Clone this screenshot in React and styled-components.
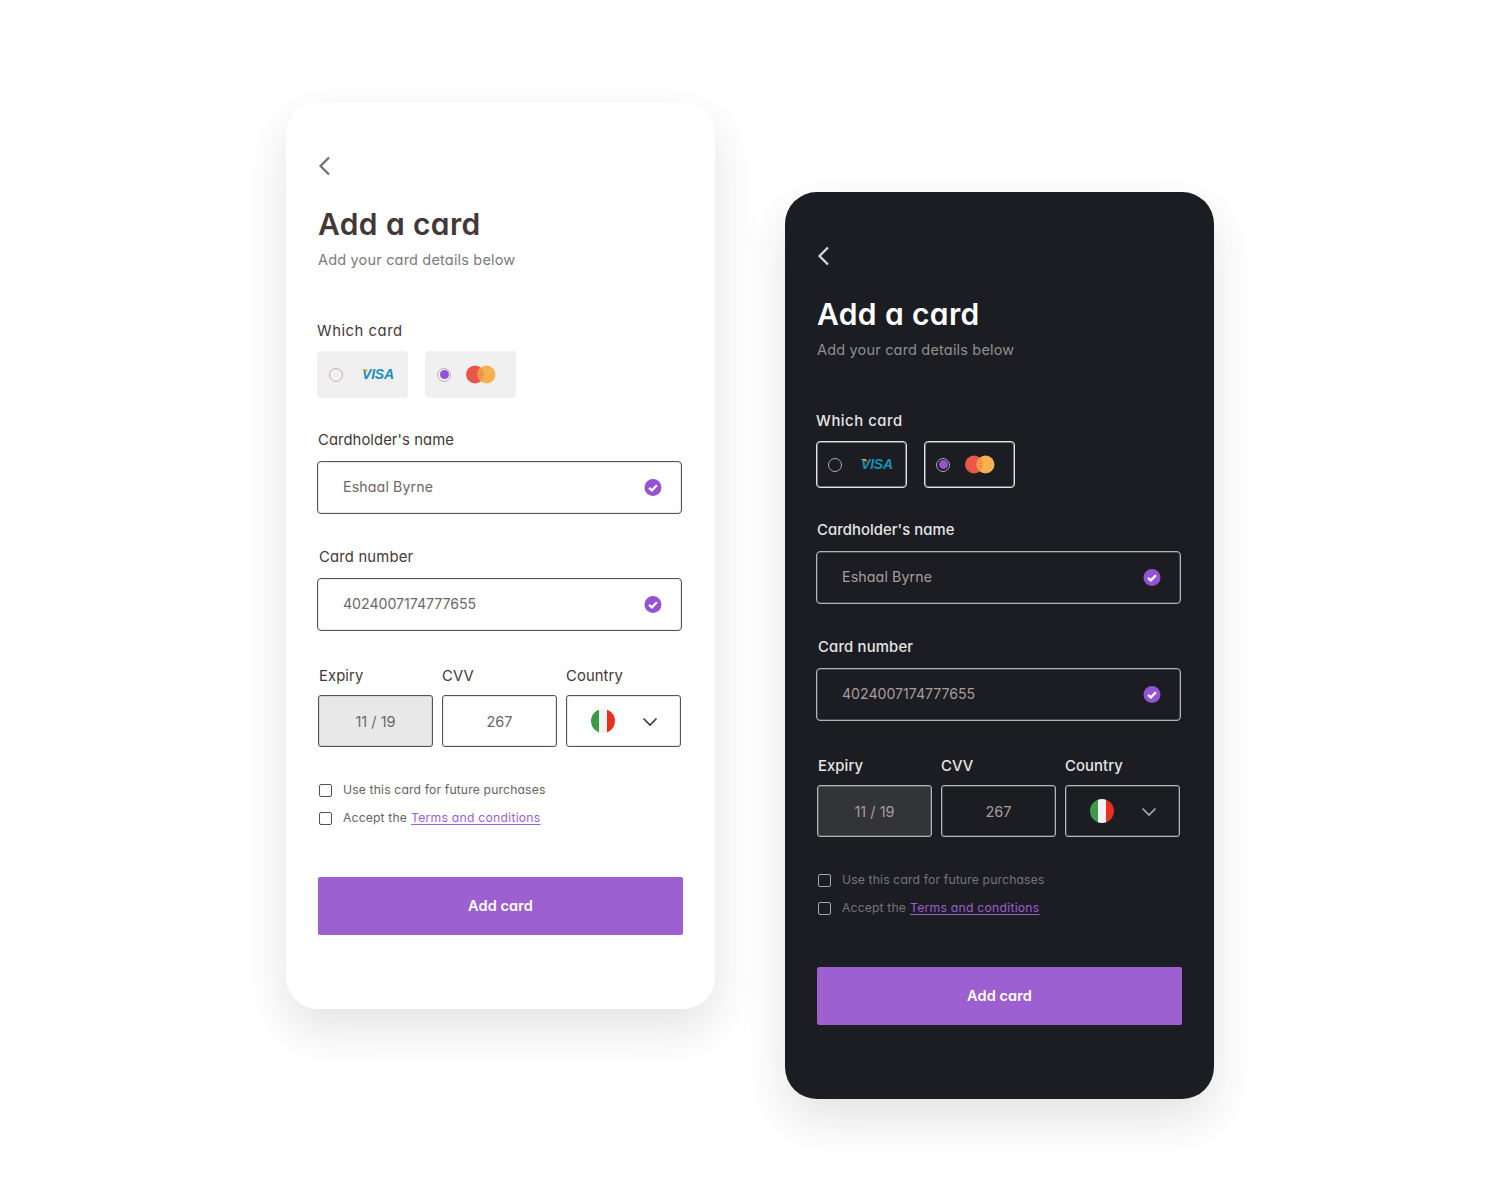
import React from "react";
import styled, { createGlobalStyle, ThemeProvider } from "styled-components";

const light = {
  bg: "#ffffff", title: "#433838", sub: "#7b7b7b", label: "#433838",
  tile: "#f0f0f0", tileBorder: "transparent", tileInner: "transparent", border: "#5a5050", soft: "rgba(90,80,80,0.12)", value: "#6e6868",
  filled: "#e8e8e8", radio: "#bfb0b0", chev: "#6f6f6f", arrow: "#433838",
  box: "#5a5050", check: "#6a6262", labelWeight: 400,
};
const dark = {
  bg: "#1c1d22", title: "#ffffff", sub: "#8f8f8f", label: "#e6e6e6",
  tile: "#1c1d22", tileBorder: "#e2e2e2", tileInner: "rgba(226,226,226,0.45)", border: "#b4b4b4", soft: "rgba(180,180,180,0.3)", value: "#a89c9c",
  filled: "#333438", radio: "#b5a8a8", chev: "#dcdcdc", arrow: "#a9a9a9",
  box: "#a8a8a8", check: "#75757a", labelWeight: 500,
};

const Global = createGlobalStyle`
  html, body { margin: 0; padding: 0; background: #fff; }
  body { font-family: Inter, "Liberation Sans", sans-serif; font-feature-settings: "cv11" 1; }
`;

const Stage = styled.main`
  display: flex; justify-content: center; align-items: flex-start; gap: 70px;
  padding-top: 102px; height: 1200px; box-sizing: border-box; overflow: hidden;
`;
const Card = styled.section`
  width: 429px; height: 907px; box-sizing: border-box; padding: 52px 32px 0;
  margin-top: ${p => p.$offset || 0}px;
  border-radius: 32px; background: ${p => p.theme.bg};
  box-shadow: 0 20px 46px rgba(40, 40, 50, 0.13);
`;
const Back = styled.button`
  display: block; width: 14px; height: 24px; padding: 0; border: 0; background: none;
  color: ${p => p.theme.chev};
`;
const Title = styled.h1`
  margin: 29px 0 0; font-size: 30px; line-height: 35px; font-weight: 600;
  letter-spacing: 0.38px; color: ${p => p.theme.title};
`;
const Sub = styled.p`
  margin: 8px 0 0; font-size: 14.5px; line-height: 20px; letter-spacing: 0.18px; color: ${p => p.theme.sub};
`;
const Label = styled.div`
  margin: ${p => p.$top || 0}px 0 0 ${p => p.$left || 0}px;
  font-size: 14.8px; line-height: 20px; letter-spacing: ${p => p.$spacing ?? 0.1}px;
  font-weight: ${p => p.theme.labelWeight}; color: ${p => p.theme.label};
`;
const Tiles = styled.div`
  display: flex; gap: 17px; margin: 10px 0 0 -1px;
`;
const Tile = styled.div`
  width: 91px; height: 47px; box-sizing: border-box; display: flex; align-items: center;
  padding-left: 11px; border-radius: 4px; background: ${p => p.theme.tile};
  border: 1px solid ${p => p.theme.tileBorder};
  box-shadow: inset 0 0 0 1px ${p => p.theme.tileInner};
`;
const Radio = styled.span`
  width: 14px; height: 14px; box-sizing: border-box; border-radius: 50%;
  border: 1px solid ${p => p.theme.radio}; display: flex; align-items: center; justify-content: center;
  flex: none;
  &::after { content: ""; width: 9px; height: 9px; border-radius: 50%; background: ${p => (p.$on ? "#9450d6" : "transparent")}; }
`;
const Logo = styled.svg`
  margin: 0 0 1px ${p => p.$gap}px; display: block; flex: none;
`;
const Input = styled.div`
  margin: 11px 0 0 -1px; width: 365px; height: 53px; box-sizing: border-box;
  display: flex; align-items: center; justify-content: space-between; padding: 0 19px 0 25px;
  border: 1px solid ${p => p.theme.border}; border-radius: 4px;
  box-shadow: inset 0 0 0 1px ${p => p.theme.soft};
  font-size: 14.2px; color: ${p => p.theme.value};
`;
const InputValue = styled.span`
  padding-bottom: 2px; letter-spacing: ${p => p.$spacing}px;
`;
const TripleLabels = styled.div`
  display: grid; grid-template-columns: 115px 115px 115px; column-gap: 9px; margin-top: 35px;
`;
const Triple = styled.div`
  display: grid; grid-template-columns: 115px 115px 115px; column-gap: 9px; margin-top: 9px;
`;
const Small = styled.div`
  height: 52px; box-sizing: border-box; display: flex; align-items: center; justify-content: center;
  border: 1px solid ${p => p.theme.border}; border-radius: 3px;
  box-shadow: inset 0 0 0 1px ${p => p.theme.soft};
  background: ${p => (p.$filled ? p.theme.filled : "transparent")};
  font-size: 14.5px; letter-spacing: 0; color: ${p => p.theme.value};
`;
const Select = styled(Small)`
  justify-content: flex-start; padding-left: 24px;
`;
const Arrow = styled.svg`
  margin: 1px 0 0 27px; color: ${p => p.theme.arrow};
`;
const CheckRow = styled.label`
  display: flex; align-items: center; height: 20px; margin: ${p => p.$top}px 0 0 1px;
  font-size: 12.2px; color: ${p => p.theme.check};
`;
const Box = styled.span`
  width: 13px; height: 13px; box-sizing: border-box; margin-right: 11px; flex: none;
  border: 1px solid ${p => p.theme.box}; border-radius: 2px;
`;
const Caption = styled.span`
  padding-bottom: 2px; letter-spacing: 0.14px;
`;
const TermsLink = styled.a`
  margin-left: 4px; letter-spacing: 0.24px; color: #9c5fd1; text-decoration: underline; text-underline-offset: 2px;
`;
const Submit = styled.button`
  display: block; width: 365px; height: 58px; margin-top: 49px; border: 0; border-radius: 2px;
  padding: 0 0 2px; background: #9c60d0; color: #fff; font: 600 14.5px Inter, "Liberation Sans", sans-serif;
  font-feature-settings: "cv11" 1; letter-spacing: 0.1px;
`;

const Chevron = () => (
  <svg width="14" height="24" viewBox="0 0 14 24" fill="none">
    <path d="M11 3.5 2.5 12l8.5 8.5" stroke="currentColor" strokeWidth="2.2" />
  </svg>
);
const Visa = () => (
  <Logo $gap={18} width="33" height="14" viewBox="0 0 33 14">
    <text x="1" y="12" fontFamily="'Liberation Sans', sans-serif" fontSize="14" fontWeight="700" fontStyle="italic" fill="#1a8fb8" letterSpacing="-0.2">VISA</text>
    <path d="M0 2h6l1 3.2C5 3.6 2.8 2.6 0 2Z" fill="#f2b33d" />
  </Logo>
);
const Master = () => (
  <Logo $gap={15} width="30" height="19" viewBox="0 0 30 19">
    <defs>
      <pattern id="stripes" width="3" height="2" patternUnits="userSpaceOnUse">
        <rect width="3" height="1" fill="#ee8a45" />
        <rect y="1" width="3" height="1" fill="#f3a04f" />
      </pattern>
    </defs>
    <circle cx="9" cy="9.5" r="9" fill="#e8574a" />
    <circle cx="20.5" cy="9.5" r="9" fill="#f5b052" />
    <path d="M14.75 2.57A9 9 0 0 1 14.75 16.43 9 9 0 0 1 14.75 2.57Z" fill="url(#stripes)" />
  </Logo>
);
const Verified = () => (
  <svg width="18" height="18" viewBox="0 0 18 18">
    <circle cx="9" cy="8.5" r="8.5" fill="#9553d4" />
    <path d="M5 8.8 7.9 11.4l5-5.2" fill="none" stroke="#fff" strokeWidth="2.3" />
  </svg>
);
const Flag = () => (
  <svg width="24" height="24" viewBox="0 0 24 24">
    <defs><clipPath id="round"><circle cx="12" cy="12" r="12" /></clipPath></defs>
    <g clipPath="url(#round)">
      <rect width="8" height="24" fill="#3d9a46" />
      <rect x="8" width="8" height="24" fill="#f3f3f3" />
      <rect x="16" width="8" height="24" fill="#e9301f" />
    </g>
  </svg>
);

const Form = ({ offset }) => (
  <Card $offset={offset}>
    <Back aria-label="Back"><Chevron /></Back>
    <Title>Add a card</Title>
    <Sub>Add your card details below</Sub>
    <Label $top={51} $left={-1} $spacing={0.55}>Which card</Label>
    <Tiles>
      <Tile><Radio /><Visa /></Tile>
      <Tile><Radio $on /><Master /></Tile>
    </Tiles>
    <Label $top={32} $spacing={0.08}>Cardholder's name</Label>
    <Input><InputValue $spacing={0.12}>Eshaal Byrne</InputValue><Verified /></Input>
    <Label $top={33} $left={1} $spacing={0.2}>Card number</Label>
    <Input><InputValue $spacing={-0.05}>4024007174777655</InputValue><Verified /></Input>
    <TripleLabels>
      <Label $left={1}>Expiry</Label>
      <Label>CVV</Label>
      <Label>Country</Label>
    </TripleLabels>
    <Triple>
      <Small $filled>11 / 19</Small>
      <Small>267</Small>
      <Select>
        <Flag />
        <Arrow width="16" height="10" viewBox="0 0 16 10" fill="none">
          <path d="M1.5 1.5 8 8l6.5-6.5" stroke="currentColor" strokeWidth="1.7" />
        </Arrow>
      </Select>
    </Triple>
    <CheckRow $top={33}><Box /><Caption>Use this card for future purchases</Caption></CheckRow>
    <CheckRow $top={8}><Box /><Caption>Accept the<TermsLink>Terms and conditions</TermsLink></Caption></CheckRow>
    <Submit>Add card</Submit>
  </Card>
);

export default function App() {
  return (
    <>
      <Global />
      <Stage>
        <ThemeProvider theme={light}><Form /></ThemeProvider>
        <ThemeProvider theme={dark}><Form offset={90} /></ThemeProvider>
      </Stage>
    </>
  );
}
